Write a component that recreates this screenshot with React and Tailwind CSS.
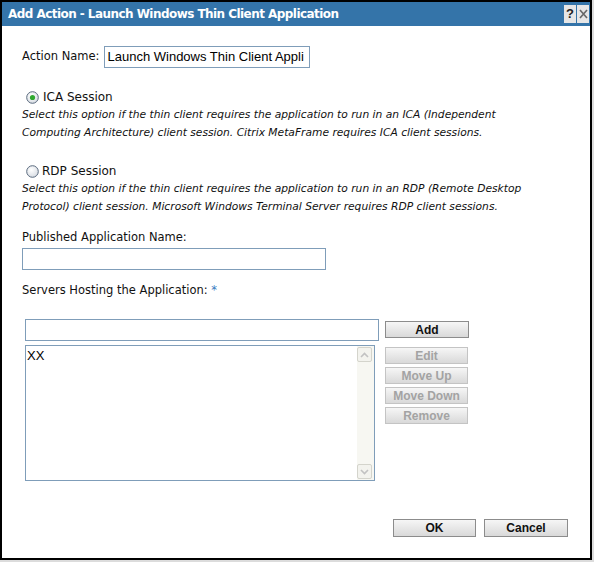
import React from 'react';

const label = "font-['DejaVu_Sans',sans-serif] text-[11.5px] text-[#111]";
const desc = "font-['DejaVu_Sans',sans-serif] italic text-[10.7px] leading-[18px] text-[#111]";

function Radio({ checked }) {
  return (
    <svg width="13" height="13" viewBox="0 0 13 13" className="shrink-0">
      <defs>
        <radialGradient id={checked ? 'rg1' : 'rg2'} cx="40%" cy="35%" r="70%">
          <stop offset="0" stopColor="#ffffff" />
          <stop offset="1" stopColor="#d6dbe2" />
        </radialGradient>
      </defs>
      <circle cx="6.5" cy="6.5" r="5.8" fill={`url(#${checked ? 'rg1' : 'rg2'})`} stroke="#5a6a7e" strokeWidth="1" />
      {checked && <circle cx="6.5" cy="6.5" r="2.6" fill="#2fa82f" />}
    </svg>
  );
}

function Btn({ children, disabled, className = '' }) {
  return (
    <div
      className={`flex items-center justify-center h-[17px] border bg-gradient-to-b from-[#f6f6f6] to-[#d9d9d9] font-['Liberation_Sans',sans-serif] font-bold text-[12px] ${
        disabled ? 'border-[#c4c4c4] text-[#a3a3a3]' : 'border-[#8c8c8c] text-[#111]'
      } ${className}`}
    >
      {children}
    </div>
  );
}

function ScrollArrow({ up }) {
  return (
    <div className="w-[15px] h-[15px] border border-[#d4d4cc] bg-[#f3f3ee] rounded-[2px] flex items-center justify-center">
      <svg width="9" height="6" viewBox="0 0 9 6">
        <path d={up ? 'M1 5 L4.5 1.5 L8 5' : 'M1 1 L4.5 4.5 L8 1'} fill="none" stroke="#c2c2c2" strokeWidth="1.6" />
      </svg>
    </div>
  );
}

export default function App() {
  return (
    <div className="w-[594px] h-[562px] bg-[#dcdcdc]">
      <div className="w-[592px] h-[560px] border-2 border-black bg-white flex flex-col">
        <div className="h-[24px] bg-[#3474a9] flex items-center justify-between pl-[6px] pr-[1px]">
          <span className="font-['DejaVu_Sans',sans-serif] font-bold text-[12px] text-white tracking-[-0.55px]">
            Add Action - Launch Windows Thin Client Application
          </span>
          <div className="flex gap-[1px]">
            <div className="w-[12px] h-[18px] bg-[#e6e6e6] flex items-center justify-center font-['Liberation_Sans',sans-serif] font-bold text-[13px] text-[#222]">
              ?
            </div>
            <div className="w-[12px] h-[18px] bg-[#e6e6e6] flex items-center justify-center">
              <svg width="9" height="10" viewBox="0 0 9 10">
                <path d="M1 1 L8 9 M8 1 L1 9" stroke="#666" strokeWidth="1.6" />
              </svg>
            </div>
          </div>
        </div>

        <div className="pl-[20px] pr-[20px] flex flex-col">
          <div className="mt-[20px] flex items-center gap-[5px]">
            <span className={label}>Action Name:</span>
            <div className="w-[206px] h-[22px] border border-[#7f9db9] flex items-center px-[2px] overflow-hidden whitespace-nowrap font-['Liberation_Sans',sans-serif] text-[13px] text-black">
              Launch Windows Thin Client Appli
            </div>
          </div>

          <div className="mt-[20px] flex items-center gap-[4px] pl-[4px] h-[18px]">
            <Radio checked />
            <span className="font-['DejaVu_Sans',sans-serif] text-[12px] text-[#111]">ICA Session</span>
          </div>
          <p className={desc}>
            Select this option if the thin client requires the application to run in an ICA (Independent
            <br />
            Computing Architecture) client session. Citrix MetaFrame requires ICA client sessions.
          </p>

          <div className="mt-[20px] flex items-center gap-[3px] pl-[4px] h-[18px]">
            <Radio />
            <span className="font-['DejaVu_Sans',sans-serif] text-[12px] text-[#111]">RDP Session</span>
          </div>
          <p className={desc}>
            Select this option if the thin client requires the application to run in an RDP (Remote Desktop
            <br />
            Protocol) client session. Microsoft Windows Terminal Server requires RDP client sessions.
          </p>

          <div className={`mt-[13px] h-[18px] flex items-center ${label}`}>Published Application Name:</div>
          <div className="mt-[1px] w-[304px] h-[22px] border border-[#7f9db9]" />

          <div className={`mt-[12px] h-[18px] flex items-center ${label}`}>
            Servers Hosting the Application:&nbsp;<span className="text-[#3a7bbf]">*</span>
          </div>

          <div className="mt-[19px] pl-[3px] flex gap-[6px]">
            <div className="flex flex-col gap-[4px]">
              <div className="w-[354px] h-[22px] border border-[#7f9db9]" />
              <div className="w-[350px] h-[136px] border border-[#7f9db9] flex">
                <div className="flex-1 pl-[1px] font-['Liberation_Sans',sans-serif] text-[13px] text-black">XX</div>
                <div className="w-[17px] bg-[#f7f7f2] flex flex-col justify-between py-[1px] pr-[1px]">
                  <ScrollArrow up />
                  <ScrollArrow />
                </div>
              </div>
            </div>
            <div className="flex flex-col gap-[3px] pt-[2px]">
              <Btn className="w-[84px]">Add</Btn>
              <div className="h-[3px]" />
              <Btn disabled className="w-[83px]">Edit</Btn>
              <Btn disabled className="w-[83px]">Move Up</Btn>
              <Btn disabled className="w-[83px]">Move Down</Btn>
              <Btn disabled className="w-[83px]">Remove</Btn>
            </div>
          </div>

          <div className="mt-[38px] flex justify-end gap-[8px] pr-[2px]">
            <Btn className="w-[83px] h-[18px]">OK</Btn>
            <Btn className="w-[84px] h-[18px]">Cancel</Btn>
          </div>
        </div>
      </div>
    </div>
  );
}
